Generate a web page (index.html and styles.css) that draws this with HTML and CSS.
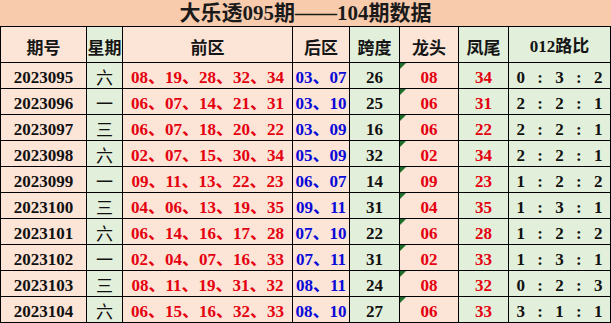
FILE: index.html
```html
<!DOCTYPE html>
<html lang="zh-CN">
<head>
<meta charset="utf-8">
<title>大乐透095期——104期数据</title>
<link rel="stylesheet" href="styles.css">
</head>
<body>
<div class="sheet">
  <div class="title">大乐透095期——104期数据</div>

  <div class="cell hd pk">期号</div>
  <div class="cell hd gr">星期</div>
  <div class="cell hd pk">前区</div>
  <div class="cell hd pk">后区</div>
  <div class="cell hd gr">跨度</div>
  <div class="cell hd pk">龙头</div>
  <div class="cell hd gr">凤尾</div>
  <div class="cell hd gr">012路比</div>

  <div class="cell pk num">2023095</div><div class="cell gr day">六</div><div class="cell pk num red">08、19、28、32、34</div><div class="cell pk num blue">03、07</div><div class="cell gr num">26</div><div class="cell pk num red mark">08</div><div class="cell gr num red">34</div><div class="cell gr num ratio">0 : 3 : 2</div>
  <div class="cell pk num">2023096</div><div class="cell gr day">一</div><div class="cell pk num red">06、07、14、21、31</div><div class="cell pk num blue">03、10</div><div class="cell gr num">25</div><div class="cell pk num red mark">06</div><div class="cell gr num red">31</div><div class="cell gr num ratio">2 : 2 : 1</div>
  <div class="cell pk num">2023097</div><div class="cell gr day">三</div><div class="cell pk num red">06、07、18、20、22</div><div class="cell pk num blue">03、09</div><div class="cell gr num">16</div><div class="cell pk num red mark">06</div><div class="cell gr num red">22</div><div class="cell gr num ratio">2 : 2 : 1</div>
  <div class="cell pk num">2023098</div><div class="cell gr day">六</div><div class="cell pk num red">02、07、15、30、34</div><div class="cell pk num blue">05、09</div><div class="cell gr num">32</div><div class="cell pk num red mark">02</div><div class="cell gr num red">34</div><div class="cell gr num ratio">2 : 2 : 1</div>
  <div class="cell pk num">2023099</div><div class="cell gr day">一</div><div class="cell pk num red">09、11、13、22、23</div><div class="cell pk num blue">06、07</div><div class="cell gr num">14</div><div class="cell pk num red mark">09</div><div class="cell gr num red">23</div><div class="cell gr num ratio">1 : 2 : 2</div>
  <div class="cell pk num">2023100</div><div class="cell gr day">三</div><div class="cell pk num red">04、06、13、19、35</div><div class="cell pk num blue">09、11</div><div class="cell gr num">31</div><div class="cell pk num red mark">04</div><div class="cell gr num red">35</div><div class="cell gr num ratio">1 : 3 : 1</div>
  <div class="cell pk num">2023101</div><div class="cell gr day">六</div><div class="cell pk num red">06、14、16、17、28</div><div class="cell pk num blue">07、10</div><div class="cell gr num">22</div><div class="cell pk num red mark">06</div><div class="cell gr num red">28</div><div class="cell gr num ratio">1 : 2 : 2</div>
  <div class="cell pk num">2023102</div><div class="cell gr day">一</div><div class="cell pk num red">02、04、07、16、33</div><div class="cell pk num blue">07、11</div><div class="cell gr num">31</div><div class="cell pk num red mark">02</div><div class="cell gr num red">33</div><div class="cell gr num ratio">1 : 3 : 1</div>
  <div class="cell pk num">2023103</div><div class="cell gr day">三</div><div class="cell pk num red">08、11、19、31、32</div><div class="cell pk num blue">08、11</div><div class="cell gr num">24</div><div class="cell pk num red mark">08</div><div class="cell gr num red">32</div><div class="cell gr num ratio">0 : 2 : 3</div>
  <div class="cell pk num">2023104</div><div class="cell gr day">六</div><div class="cell pk num red">06、15、16、32、33</div><div class="cell pk num blue">08、10</div><div class="cell gr num">27</div><div class="cell pk num red mark">06</div><div class="cell gr num red">33</div><div class="cell gr num ratio">3 : 1 : 1</div>
</div>
</body>
</html>
```

FILE: styles.css
```css
html, body {
  margin: 0;
  padding: 0;
  background: #ffffff;
}

.sheet {
  width: 611px;
  box-sizing: border-box;
  display: grid;
  grid-template-columns: 85px 35px 169px 56px 49px 58px 49px 101px;
  grid-template-rows: 26px 35px repeat(10, 25px);
  gap: 1px;
  padding: 0 1px 1px 1px;
  background: #000000;
  font-family: "Liberation Serif", "Noto Sans CJK SC", serif;
  color: #111111;
}

.title {
  grid-column: 1 / -1;
  background: #f8cbad;
  margin: 0 -1px;
  display: flex;
  align-items: center;
  justify-content: center;
  font-size: 21px;
  font-weight: 700;
  line-height: 1;
  padding-top: 1px;
  color: #1a1a1a;
}

.cell {
  position: relative;
  display: flex;
  align-items: center;
  justify-content: center;
  line-height: 1;
  white-space: nowrap;
}

.pk { background: #fce4d6; }
.gr { background: #e2efda; }

.hd {
  font-family: "Noto Sans CJK SC", sans-serif;
  font-size: 17px;
  font-weight: 700;
  padding-top: 4px;
  color: #151515;
}

.hd:last-child, .sheet .hd:nth-child(9) {
  font-family: "Liberation Serif", "Noto Sans CJK SC", serif;
}

.num {
  font-size: 17px;
  font-weight: 700;
  padding-top: 3px;
}

.day {
  font-family: "Noto Sans CJK SC", sans-serif;
  font-size: 17px;
  font-weight: 400;
  padding-top: 2px;
}

.red { color: #e4000f; }
.blue { color: #0a0ad8; }

.ratio {
  word-spacing: 8px;
}

.mark::before {
  content: "";
  position: absolute;
  left: 0;
  top: 0;
  width: 0;
  height: 0;
  border-top: 6px solid #1f6e2a;
  border-right: 6px solid transparent;
}
```
